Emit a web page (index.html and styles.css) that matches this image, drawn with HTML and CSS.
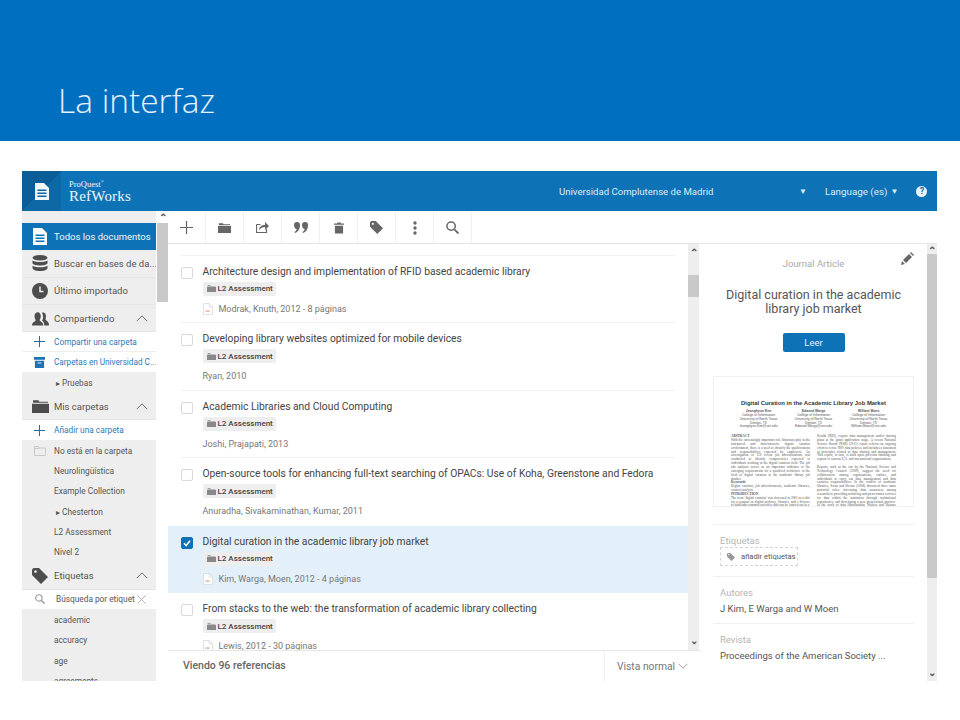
FILE: index.html
```html
<!DOCTYPE html>
<html lang="es">
<head>
<meta charset="utf-8">
<title>La interfaz</title>
<link rel="stylesheet" href="styles.css">
</head>
<body>
<svg class="defs" width="0" height="0" aria-hidden="true">
  <symbol id="i-folder" viewBox="0 0 16 12"><path d="M1 0h5l1 1.500h8v1H1zM0 3.500h16V12H0z" fill="currentColor"/></symbol>
  <symbol id="i-chev" viewBox="0 0 16 9"><path d="M1 8l7-7 7 7" fill="none" stroke="currentColor" stroke-width="1.100"/></symbol>
  <symbol id="i-chev-down" viewBox="0 0 16 9"><path d="M1 1l7 7 7-7" fill="none" stroke="currentColor" stroke-width="1.100"/></symbol>
  <symbol id="i-plus" viewBox="0 0 16 16"><path d="M8 0v16M0 8h16" fill="none" stroke="currentColor" stroke-width="1.500"/></symbol>
  <symbol id="i-pdf" viewBox="0 0 12 14"><path d="M.5.500h7l4 4v9H.5z" fill="#fff" stroke="#d8d8d8"/><path d="M7.500.500v4h4" fill="none" stroke="#d8d8d8"/><path d="M3 9.500h5" stroke="#eeb7a5" stroke-width="2"/></symbol>
  <symbol id="i-tag" viewBox="0 0 16 16"><path d="M0 1.500 1.500 0H7l9 9-7 7-9-9zM3.500 2.200a1.300 1.300 0 1 0 .01 0z" fill="currentColor" fill-rule="evenodd"/></symbol>
  <symbol id="i-search" viewBox="0 0 14 14"><circle cx="5.500" cy="5.500" r="4.500" fill="none" stroke="currentColor" stroke-width="1.600"/><path d="M9 9l4.500 4.500" stroke="currentColor" stroke-width="2"/></symbol>
  <symbol id="i-doc" viewBox="0 0 14 17"><path d="M0 0h9l5 5v12H0zM2.500 6.500v1.500h9V6.500zM2.500 9.500V11h9V9.500zM2.500 12.500V14h9v-1.500z" fill="currentColor" fill-rule="evenodd"/></symbol>
</svg>

<header class="hero"><h1 class="hero-title">La interfaz</h1></header>

<div class="app">
  <div class="topbar">
    <div class="logo-box"><svg class="logo-doc"><use href="#i-doc"/></svg></div>
    <div class="brand"><span class="brand-small">ProQuest<sup>®</sup></span><span class="brand-big">RefWorks</span></div>
    <span class="org">Universidad Complutense de Madrid</span>
    <span class="caret org-caret">▼</span>
    <span class="lang">Language (es)</span>
    <span class="caret lang-caret">▼</span>
    <span class="help">?</span>
  </div>

  <div class="main">
    <aside class="side">
      <div class="side-scroll">
        <div class="side-inner">
          <div class="row big active"><svg class="row-icon doc"><use href="#i-doc"/></svg><span class="row-text">Todos los documentos</span></div>
          <div class="row big">
            <svg class="row-icon" viewBox="0 0 16 16"><ellipse cx="8" cy="2.800" rx="7.500" ry="2.800" fill="currentColor"/><path d="M.5 5.200c1 2.400 14 2.400 15 0v3c-1 3-14 3-15 0zM.5 10.400c1 2.400 14 2.400 15 0v2.800c-1 3.800-14 3.800-15 0z" fill="currentColor"/></svg>
            <span class="row-text">Buscar en bases de da...</span>
          </div>
          <div class="row big">
            <svg class="row-icon" viewBox="0 0 16 16"><circle cx="8" cy="8" r="8" fill="currentColor"/><path d="M8 3.500V8.500h3.500" fill="none" stroke="#eee" stroke-width="1.500"/></svg>
            <span class="row-text">Último importado</span>
          </div>
          <div class="row big">
            <svg class="row-icon people" viewBox="0 0 18 16"><path d="M0 16c0-4 3-4 4-6-2-2-2-8 2-8s4 6 2 8c1 2 4 2 4 6zM13 16c0-3-1-4-2.500-5.500 1-.5 1.200-2 1.200-3.500 0-2-.5-3.500-1.200-4.500 3-1 5 1.500 4 6-.4 1 0 1.500 1 2.500 1 .8 2.500 1.500 2.500 5z" fill="currentColor"/></svg>
            <span class="row-text">Compartiendo</span><svg class="chev"><use href="#i-chev"/></svg>
          </div>
          <div class="row small white link"><svg class="row-icon plus"><use href="#i-plus"/></svg><span class="row-text">Compartir una carpeta</span></div>
          <div class="row small white link">
            <svg class="row-icon box" viewBox="0 0 12 12"><path d="M0 0h12v3H0zM1 4h10v8H1z" fill="currentColor"/><path d="M4 6.500h4" stroke="#fff"/></svg>
            <span class="row-text long">Carpetas en Universidad C...</span>
          </div>
          <div class="row small"><span class="row-text tri">▸ Pruebas</span></div>
          <div class="row big"><svg class="row-icon folder"><use href="#i-folder"/></svg><span class="row-text">Mis carpetas</span><svg class="chev"><use href="#i-chev"/></svg></div>
          <div class="row small white link"><svg class="row-icon plus"><use href="#i-plus"/></svg><span class="row-text">Añadir una carpeta</span></div>
          <div class="row small">
            <svg class="row-icon empty" viewBox="0 0 12 10"><path d="M.5 9.500V.500h4l1 1.500h6v7.500zM.5 2.500h5" fill="none" stroke="#c9c9c9"/></svg>
            <span class="row-text">No está en la carpeta</span>
          </div>
          <div class="row small"><span class="row-text">Neurolingüística</span></div>
          <div class="row small"><span class="row-text">Example Collection</span></div>
          <div class="row small"><span class="row-text tri">▸ Chesterton</span></div>
          <div class="row small"><span class="row-text">L2 Assessment</span></div>
          <div class="row small"><span class="row-text">Nivel 2</span></div>
          <div class="row big"><svg class="row-icon"><use href="#i-tag"/></svg><span class="row-text">Etiquetas</span><svg class="chev"><use href="#i-chev"/></svg></div>
          <div class="row small white">
            <svg class="row-icon lens"><use href="#i-search"/></svg>
            <span class="row-text tag-search">Búsqueda por etiquet</span>
            <svg class="close" viewBox="0 0 10 10"><path d="M.5.500l9 9M9.500.500l-9 9" stroke="currentColor" stroke-width="1"/></svg>
          </div>
          <div class="row small"><span class="row-text">academic</span></div>
          <div class="row small"><span class="row-text">accuracy</span></div>
          <div class="row small"><span class="row-text">age</span></div>
          <div class="row small"><span class="row-text">agreements</span></div>
        </div>
      </div>
      <div class="scrollbar side-bar"><span class="arrow">⌃</span><span class="thumb"></span></div>
    </aside>

    <section class="center">
      <div class="toolbar">
        <span class="tool"><svg class="t-plus"><use href="#i-plus"/></svg></span>
        <span class="tool"><svg class="t-folder"><use href="#i-folder"/></svg></span>
        <span class="tool"><svg class="t-share" viewBox="0 0 13 11"><path d="M.5 2.500h4M.5 2.500v8h10V7" fill="none" stroke="currentColor" stroke-width="1.200"/><path d="M3 8c0-3 2.500-5 6-5V0l4 4-4 4V5C7 5 4.500 6 3 8z" fill="currentColor"/></svg></span>
        <span class="tool"><svg class="t-quote" viewBox="0 0 14 11"><path d="M0 3a3 3 0 1 1 6 0c0 4-2 7-5 8l-.5-1c1.500-.8 2-2 2.200-3C1 7 0 5 0 3zM8 3a3 3 0 1 1 6 0c0 4-2 7-5 8l-.5-1c1.500-.8 2-2 2.200-3C9 7 8 5 8 3z" fill="currentColor"/></svg></span>
        <span class="tool"><svg class="t-trash" viewBox="0 0 11 12"><path d="M3.500 0h4v1H11v1.500H0V1h3.500zM1 3.500h9V12H1z" fill="currentColor"/></svg></span>
        <span class="tool"><svg class="t-tag"><use href="#i-tag"/></svg></span>
        <span class="tool"><svg class="t-more" viewBox="0 0 4 14"><circle cx="2" cy="2" r="1.700" fill="currentColor"/><circle cx="2" cy="7" r="1.700" fill="currentColor"/><circle cx="2" cy="12" r="1.700" fill="currentColor"/></svg></span>
        <span class="tool"><svg class="t-search"><use href="#i-search"/></svg></span>
      </div>

      <div class="list-wrap">
        <div class="list">
          <article class="item first">
            <span class="check"></span>
            <div class="item-body"><h3 class="item-title">&nbsp;</h3><span class="tag">&nbsp;</span><p class="meta">Kumar, Prajapati, 2012</p></div>
          </article>
          <article class="item">
            <span class="check"></span>
            <div class="item-body"><h3 class="item-title">Architecture design and implementation of RFID based academic library</h3>
            <span class="tag"><svg class="tag-icon"><use href="#i-folder"/></svg>L2 Assessment</span>
            <p class="meta"><svg class="pdf"><use href="#i-pdf"/></svg>Modrak, Knuth, 2012 - 8 páginas</p></div>
          </article>
          <article class="item">
            <span class="check"></span>
            <div class="item-body"><h3 class="item-title">Developing library websites optimized for mobile devices</h3>
            <span class="tag"><svg class="tag-icon"><use href="#i-folder"/></svg>L2 Assessment</span>
            <p class="meta">Ryan, 2010</p></div>
          </article>
          <article class="item">
            <span class="check"></span>
            <div class="item-body"><h3 class="item-title">Academic Libraries and Cloud Computing</h3>
            <span class="tag"><svg class="tag-icon"><use href="#i-folder"/></svg>L2 Assessment</span>
            <p class="meta">Joshi, Prajapati, 2013</p></div>
          </article>
          <article class="item">
            <span class="check"></span>
            <div class="item-body"><h3 class="item-title">Open-source tools for enhancing full-text searching of OPACs: Use of Koha, Greenstone and Fedora</h3>
            <span class="tag"><svg class="tag-icon"><use href="#i-folder"/></svg>L2 Assessment</span>
            <p class="meta">Anuradha, Sivakaminathan, Kumar, 2011</p></div>
          </article>
          <article class="item selected">
            <span class="check checked"><svg viewBox="0 0 10 10"><path d="M2 5.200 4.200 7.500 8 2.800" fill="none" stroke="#fff" stroke-width="1.600"/></svg></span>
            <div class="item-body"><h3 class="item-title">Digital curation in the academic library job market</h3>
            <span class="tag"><svg class="tag-icon"><use href="#i-folder"/></svg>L2 Assessment</span>
            <p class="meta"><svg class="pdf"><use href="#i-pdf"/></svg>Kim, Warga, Moen, 2012 - 4 páginas</p></div>
          </article>
          <article class="item">
            <span class="check"></span>
            <div class="item-body"><h3 class="item-title">From stacks to the web: the transformation of academic library collecting</h3>
            <span class="tag"><svg class="tag-icon"><use href="#i-folder"/></svg>L2 Assessment</span>
            <p class="meta"><svg class="pdf"><use href="#i-pdf"/></svg>Lewis, 2012 - 30 páginas</p></div>
          </article>
        </div>
        <div class="scrollbar list-bar"><span class="arrow">⌃</span><span class="thumb"></span><span class="arrow down">⌄</span></div>
      </div>

      <div class="footer">
        <span class="count">Viendo 96 referencias</span>
        <span class="view">Vista normal<svg class="view-chev"><use href="#i-chev-down"/></svg></span>
      </div>
    </section>

    <section class="detail">
      <div class="detail-body">
        <div class="type-row">
          <span class="type">Journal Article</span>
          <svg class="pencil" viewBox="0 0 13 13"><path d="M0 13l1-4 3 3zM2 8l6-6 3 3-6 6zM9 1l1-1 3 3-1 1z" fill="currentColor"/></svg>
        </div>
        <h2 class="d-title">Digital curation in the academic library job market</h2>
        <div class="btn-row"><span class="read">Leer</span></div>
        <div class="paper">
          <p class="p-title">Digital Curation in the Academic Library Job Market</p>
          <div class="p-authors">
            <div><b>Jeonghyun Kim</b><br>College of Information<br>University of North Texas<br>Denton, TX<br>Jeonghyun.Kim@unt.edu</div>
            <div><b>Edward Warga</b><br>College of Information<br>University of North Texas<br>Denton, TX<br>Edward.Warga@unt.edu</div>
            <div><b>William Moen</b><br>College of Information<br>University of North Texas<br>Denton, TX<br>William.Moen@unt.edu</div>
          </div>
          <div class="p-cols">
            <div><b>ABSTRACT</b><br>With the increasingly important role librarians play in the fast-paced and data-intensive digital curation environment, there is a need to identify the qualifications and responsibilities expected by employers. An investigation of 110 recent job advertisements was conducted to identify competencies expected of individuals working in the digital curation field. The job ads analysis serves as an important indicator of the emerging requirements for a qualified workforce in the field of digital curation in the academic library job market.<br><b>Keywords</b><br>Digital curation, job advertisements, academic libraries, content analysis<br><b>INTRODUCTION</b><br>The term ‘digital curation’ was first used in 2001 as a title for a seminar on digital archives, libraries, and e-Science to highlight common activities that can be carried out in a</div>
            <div>Health (NIH), require data management and/or sharing plans at the grant application stage. A recent National Science Board (NSB) (2011) report reflects an ongoing effort to refine NSF data policies and includes a statement of principles related to data sharing and management. This report, in turn, is built upon previous thinking and reports of various U.S. and international organizations.<br><br>Reports, such as the one by the National Science and Technology Council (2009), suggest the need for collaboration among organizations, entities, and individuals to carry out data management and data curation responsibilities. In the context of academic libraries, Swan and Brown (2008) discussed three main potential roles: increasing data awareness among researchers; providing archiving and preservation services for data within the institution through institutional repositories; and developing a new professional practice. In the work of data librarianship, Walters and Skinner (2011) also highlighted a</div>
          </div>
        </div>
        <div class="d-sec tags-sec"><span class="d-label">Etiquetas</span>
          <span class="add-tag"><svg class="add-icon"><use href="#i-tag"/></svg>añadir etiquetas</span></div>
        <div class="d-sec"><span class="d-label">Autores</span><span class="d-value">J Kim, E Warga and W Moen</span></div>
        <div class="d-sec"><span class="d-label">Revista</span><span class="d-value">Proceedings of the American Society ...</span></div>
      </div>
      <div class="scrollbar detail-bar"><span class="arrow">⌃</span><span class="thumb"></span><span class="arrow down">⌄</span></div>
    </section>
  </div>
</div>
</body>
</html>
```
FILE: styles.css
```css
* { box-sizing: border-box; }
html, body { margin: 0; padding: 0; background: #fff; }
body { font-family: Roboto, "Liberation Sans", sans-serif; color: #555; overflow: hidden; height: 720px; }
.defs { position: absolute; }
svg { display: block; flex: none; }

.hero { height: 141px; background: #006fc0; padding: 77px 0 0 58px; }
.hero-title { margin: 0; font: 300 33.500px/46px "Open Sans", sans-serif; color: #e6f1fa; }

.app { margin: 30px 23px 0 22px; height: 510px; display: flex; flex-direction: column; overflow: hidden; }

.topbar { height: 40px; background: #0e73b6; color: #dcebf6; display: flex; align-items: center; font-size: 9.600px; flex: none; }
.logo-box { width: 39px; height: 40px; background: linear-gradient(135deg, #0b5d97 50%, #0e68a6 50%); display: flex; align-items: center; justify-content: center; }
.logo-doc { width: 14px; height: 17px; color: #f2f6fa; }
.brand { margin-left: 8px; display: flex; flex-direction: column; width: 490px; color: #eef5fa; font-family: "Liberation Serif", serif; }
.brand-small { font-size: 8.500px; line-height: 9px; }
.brand-small sup { font-size: 4px; line-height: 0; }
.brand-big { font-size: 15px; line-height: 14px; letter-spacing: .2px; }
.org { width: 240px; }
.caret { font-size: 8px; }
.org-caret { width: 26px; }
.lang { font-size: 9.800px; }
.lang-caret { margin-left: 3px; width: 26px; }
.help { width: 11px; height: 11px; border-radius: 50%; background: #e9f2f8; color: #0e73b6; font-size: 9px; font-weight: 700; line-height: 11px; text-align: center; }

.main { flex: 1; display: flex; min-height: 0; }

.side { width: 146px; background: #fff; display: flex; flex: none; }
.side-scroll { width: 134px; background: #eee; overflow: hidden; padding-top: 12px; flex: none; }
.row { display: flex; align-items: center; color: #555; white-space: nowrap; position: relative; }
.row.big { height: 27.300px; font-size: 9.500px; border-bottom: 1px solid #e6e6e6; }
.row.small { height: 20.300px; font-size: 8.300px; }
.row.white { background: #fff; border-bottom: 1px solid #eee; }
.row.link { color: #2a7ab8; }
.row.active { background: #0e73b6; color: #eef5fa; border: 0; }
.row-icon { width: 16px; height: 16px; margin-left: 10px; color: #4d4d4d; }
.row-icon.people { width: 17px; }
.row-text { position: absolute; left: 32px; }
.row-text.long { font-size: 8.200px; }
.row-icon.doc { color: #fff; width: 14px; height: 17px; margin-left: 11px; }
.row-icon.plus { width: 11px; height: 11px; margin-left: 12px; color: #1c6fae; }
.row-icon.box { width: 11px; height: 11px; margin-left: 12px; color: #1c72b4; }
.row-icon.empty { width: 12px; height: 10px; margin-left: 12px; }
.row-icon.lens { width: 10px; height: 10px; margin-left: 13px; color: #999; }
.row-icon.folder { width: 17px; height: 13px; margin-left: 10px; }
.tri { left: 34px; }
.tag-search { left: 34px; }
.chev { position: absolute; left: 114px; top: 10px; width: 12px; height: 7px; color: #555; }
.close { position: absolute; left: 115px; top: 5px; width: 9px; height: 9px; color: #aaa; }

.scrollbar { background: #eee; display: flex; flex-direction: column; flex: none; position: relative; }
.side-bar { width: 11px; margin-left: 1px; background: #fff; }
.side-bar .thumb { height: 79px; }
.arrow { display: block; height: 11px; font-size: 10px; line-height: 14px; text-align: center; color: #555; font-weight: 700; overflow: hidden; }
.arrow.down { line-height: 6px; position: absolute; bottom: 1px; left: 0; right: 0; }
.thumb { display: block; background: #c9c9c9; margin-top: 1px; }

.center { width: 532px; display: flex; flex-direction: column; flex: none; }
.toolbar { height: 32px; margin-top: 1px; border-bottom: 1px solid #e3e3e3; display: flex; flex: none; color: #666; }
.tool { width: 38px; border-right: 1px solid #f0f0f0; display: flex; align-items: center; justify-content: center; }
.t-plus { width: 13px; height: 13px; }
.t-folder { width: 13px; height: 10px; }
.t-share { width: 13px; height: 11px; }
.t-quote { width: 14px; height: 11px; }
.t-trash { width: 10px; height: 12px; }
.t-tag { width: 13px; height: 13px; }
.t-more { width: 4px; height: 14px; }
.t-search { width: 13px; height: 13px; }

.list-wrap { flex: 1; display: flex; min-height: 0; }
.list { width: 520px; overflow: hidden; flex: none; }
.item { height: 67.500px; display: flex; padding: 0 13px; position: relative; }
.item::after { content: ""; position: absolute; left: 13px; right: 13px; bottom: 0; height: 1px; background: #f1f1f1; }
.item.first { margin-top: -56px; }
.item.first .item-body { padding-top: 7px; }
.item.selected { background: #e3f0f9; }
.item.selected::after, .item:has(+ .selected)::after { display: none; }
.check { width: 12px; height: 12px; margin-top: 11px; border: 1px solid #d9d9d9; border-radius: 2px; background: #fff; flex: none; }
.check.checked { background: #0e73b6; border-color: #0e73b6; }
.check svg { width: 10px; height: 10px; }
.item-body { margin-left: 9.500px; padding-top: 9px; min-width: 0; }
.item-title { margin: 0; font-size: 10.300px; line-height: 14px; font-weight: 400; color: #444; white-space: nowrap; }
.tag { display: flex; align-items: center; width: 73px; height: 14px; margin-top: 3px; background: #eee; border-radius: 2px; font-size: 8px; font-weight: 500; color: #444; padding-left: 4px; white-space: nowrap; }
.tag-icon { width: 9px; height: 7px; margin-right: 2px; color: #888; }
.meta { margin: 6px 0 0; display: flex; align-items: center; height: 14px; font-size: 9px; color: #777; white-space: nowrap; }
.pdf { width: 10px; height: 12px; margin-right: 6px; }
.list-bar { width: 11px; }
.list-bar .thumb { height: 22px; margin-top: 31px; }
.list-bar .arrow { position: absolute; top: 2px; left: 0; right: 0; }
.list-bar .arrow.down { top: auto; bottom: 1px; }

.footer { height: 31px; border-top: 1px solid #e6e6e6; display: flex; align-items: center; justify-content: space-between; flex: none; padding-left: 15px; }
.count { font-size: 10.500px; font-weight: 500; color: #666; margin-bottom: 1px; }
.view { width: 96px; height: 100%; border-left: 1px solid #f0f0f0; padding-left: 12px; display: flex; align-items: center; font-size: 10.300px; color: #777; }
.view-chev { width: 10px; height: 6px; margin-left: 3px; color: #777; }

.detail { flex: 1; display: flex; border-top: 1px solid #e6e6e6; margin-top: 32px; min-width: 0; }
.detail-body { width: 227px; padding: 0 13px; flex: none; overflow: hidden; }
.type-row { height: 32px; position: relative; text-align: center; padding-top: 14px; }
.type { font-size: 9.500px; color: #aaa; line-height: 12px; display: block; }
.pencil { position: absolute; left: 188px; top: 8px; width: 13px; height: 13px; color: #666; }
.d-title { margin: 12px 0 0; font-size: 12.500px; line-height: 14px; font-weight: 400; color: #555; text-align: center; }
.btn-row { display: flex; justify-content: center; margin-top: 17px; }
.read { width: 62px; height: 19px; background: #0e73b6; border-radius: 2px; color: #e6f1fa; font-size: 9.500px; line-height: 19px; text-align: center; }
.paper { margin-top: 24px; height: 131px; border: 1px solid #f0f0f0; padding: 23px 17px 0; overflow: hidden; font: 3.400px/3.850px "Liberation Serif", serif; color: #555; }
.p-title { margin: 0 0 3px; font: 700 5.900px/7px "Liberation Sans", sans-serif; color: #333; text-align: center; white-space: nowrap; }
.p-authors { display: grid; grid-template-columns: repeat(3, 1fr); text-align: center; font-family: "Liberation Sans", sans-serif; margin-bottom: 6px; white-space: nowrap; }
.p-cols { display: grid; grid-template-columns: 1fr 1fr; gap: 7px; text-align: justify; }
.d-sec { border-top: 1px solid #f0f0f0; display: flex; flex-direction: column; height: 46.500px; padding: 10px 0 0 7px; }
.tags-sec { margin-top: 17px; height: 52px; }
.d-label { font-size: 9.500px; line-height: 12px; color: #b5b5b5; }
.d-value { font-size: 9.500px; line-height: 14px; color: #555; margin-top: 3px; white-space: nowrap; }
.add-tag { display: flex; align-items: center; width: 78px; height: 19px; margin-top: 0; border: 1px dashed #d5d5d5; font-size: 7.600px; color: #555; white-space: nowrap; padding-left: 6px; }
.add-icon { width: 8px; height: 8px; margin-right: 6px; color: #999; }
.detail-bar { width: 10px; }
.detail-bar .arrow { height: 10px; }
.detail-bar .thumb { height: 324px; margin-top: 0; }
```
